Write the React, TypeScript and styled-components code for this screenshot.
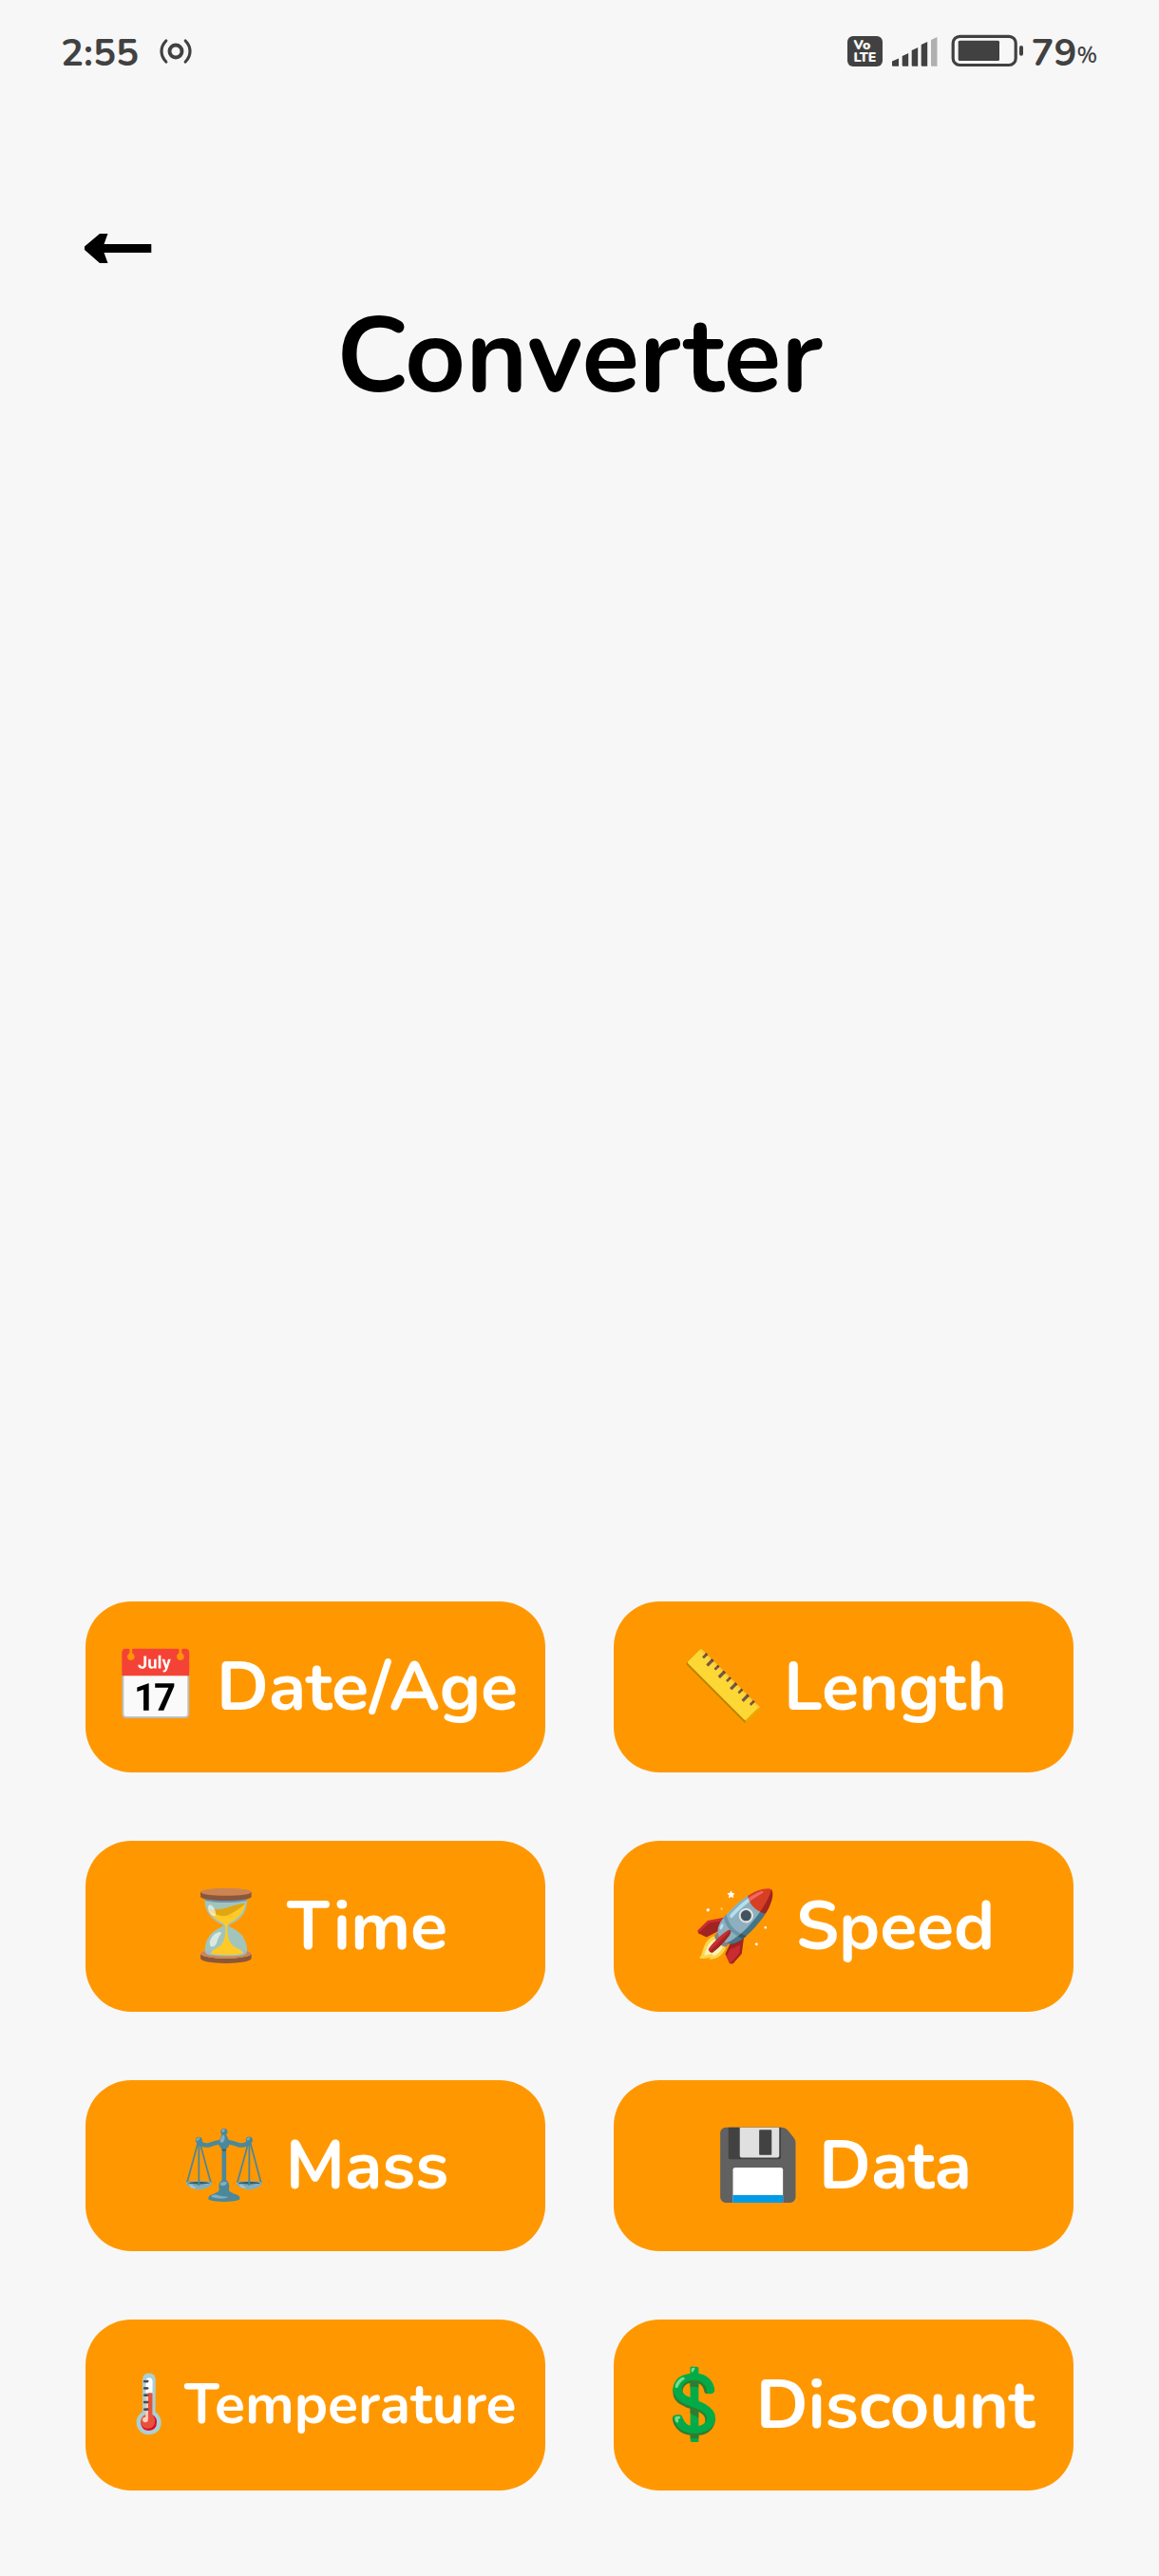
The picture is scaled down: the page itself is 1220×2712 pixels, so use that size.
import React from "react";
import styled, { createGlobalStyle } from "styled-components";

const GlobalStyle = createGlobalStyle`
  * { box-sizing: border-box; }
  body { margin: 0; background: #f7f7f7; }
`;

const font = `Nunito, Lato, "Noto Color Emoji", sans-serif`;
const ink = "#414141";

const Screen = styled.main`
  width: 1220px;
  height: 2712px;
  display: flex;
  flex-direction: column;
  background: #f7f7f7;
  font-family: ${font};
`;

const StatusBar = styled.header`
  height: 108px;
  display: flex;
  justify-content: space-between;
  align-items: flex-start;
  padding: 36px 65px 0 64px;
  color: ${ink};
`;

const StatusGroup = styled.div<{ $gap: number }>`
  display: flex;
  height: 36px;
  align-items: center;
  gap: ${(p) => p.$gap}px;
`;

const StatusText = styled.span`
  padding-top: 3px;
  font-size: 40px;
  font-weight: 700;
  line-height: 40px;
`;

const Percentage = styled.div`
  display: flex;
  align-items: center;
  margin-left: 8px;
`;

const Percent = styled.span`
  padding-top: 9px;
  font-size: 23px;
  font-weight: 600;
  line-height: 30px;
`;

const Badge = styled.div`
  width: 37px;
  height: 32px;
  padding-left: 6px;
  border-radius: 6px;
  background: ${ink};
  color: #f7f7f7;
  display: flex;
  flex-direction: column;
  justify-content: center;
  font-size: 14px;
  line-height: 13px;
  font-weight: 900;
`;

const BadgeSlot = styled.div`
  display: flex;
  align-items: center;
  height: 36px;
`;

const Signal = styled.svg`
  display: block;
  width: 48px;
  height: 36px;
  margin-left: 10px;
  fill: ${ink};
`;

const Battery = styled.svg`
  display: block;
  width: 76px;
  height: 36px;
  margin-left: 14px;
`;

const BackButton = styled.button`
  width: 71px;
  height: 31px;
  margin: 138px 0 0 89px;
  padding: 0;
  border: 0;
  background: none;
  display: flex;
`;

const Title = styled.h1`
  margin: 46px 0 0;
  text-align: center;
  font-size: 111.4px;
  font-weight: 700;
  line-height: 104px;
  color: #000;
`;

const Grid = styled.section`
  margin-top: auto;
  padding: 0 90px 90px;
  display: grid;
  grid-template-columns: 484px 484px;
  justify-content: space-between;
  row-gap: 72px;
`;

const Tile = styled.button<{ $compact?: boolean }>`
  height: 180px;
  padding: 0 0 ${(p) => (p.$compact ? 1 : 0)}px;
  border: 0;
  border-radius: 48px;
  background: #ff9800;
  color: #fff;
  display: flex;
  align-items: center;
  justify-content: center;
  font-family: ${font};
  font-size: ${(p) => (p.$compact ? 59 : 72)}px;
  font-weight: 700;
  line-height: 1;
  letter-spacing: ${(p) => (p.$compact ? 0 : -0.12)}px;
  white-space: pre;
`;

type Converter = { label: string; compact?: boolean };

const converters: Converter[] = [
  { label: "📅 Date/Age" },
  { label: "📏 Length" },
  { label: "⏳ Time" },
  { label: "🚀 Speed" },
  { label: "⚖️ Mass" },
  { label: "💾 Data" },
  { label: "🌡️Temperature", compact: true },
  { label: "💲 Discount" },
];

const HotspotIcon = () => (
  <svg width="34" height="28" viewBox="0 0 34 28" fill="none" stroke={ink} strokeLinecap="round">
    <circle cx="17" cy="14" r="6.500" strokeWidth="3.900" />
    <path d="M6.800 3C.4 9.500.4 18.500 6.800 25M27.200 3c6.400 6.500 6.400 15.500 0 22" strokeWidth="3.200" />
  </svg>
);

const SignalIcon = () => (
  <Signal viewBox="0 0 48 36">
    <path d="M0 28.500 7 25.500V33.700H1q-1 0-1-1z" />
    <path d="M10.700 23 17.200 20V33.700h-5.500q-1 0-1-1z" />
    <path d="M20.700 17 27.200 14V33.700h-5.500q-1 0-1-1z" />
    <path d="M30.700 11 37.200 8V33.700h-5.500q-1 0-1-1z" />
    <path d="M41 6 47.500 3V33.700h-5.500q-1 0-1-1z" fill="#b0b0b0" />
  </Signal>
);

const BatteryIcon = () => (
  <Battery viewBox="0 0 76 36">
    <rect x="2.200" y="2.300" width="66" height="30.200" rx="7" fill="none" stroke={ink} strokeWidth="3.200" />
    <rect x="7.700" y="6.800" width="43.300" height="21.300" rx="1.500" fill={ink} />
    <rect x="72" y="12" width="4" height="10.800" rx="2" fill={ink} />
  </Battery>
);

const BackArrow = () => (
  <svg width="71" height="31" viewBox="0 0 71 31">
    <path d="M0 13.500 16 0h8.500l-4 11H70.300v9H20.500l4 11H16L0 17z" />
  </svg>
);

export default function App() {
  return (
    <Screen>
      <GlobalStyle />
      <StatusBar>
        <StatusGroup $gap={22}>
          <StatusText>2:55</StatusText>
          <HotspotIcon />
        </StatusGroup>
        <StatusGroup $gap={0}>
          <BadgeSlot>
            <Badge>
              <span>Vo</span>
              <span>LTE</span>
            </Badge>
          </BadgeSlot>
          <SignalIcon />
          <BatteryIcon />
          <Percentage>
            <StatusText>79</StatusText>
            <Percent>%</Percent>
          </Percentage>
        </StatusGroup>
      </StatusBar>
      <BackButton aria-label="Back">
        <BackArrow />
      </BackButton>
      <Title>Converter</Title>
      <Grid>
        {converters.map((c) => (
          <Tile key={c.label} $compact={c.compact}>
            {c.label}
          </Tile>
        ))}
      </Grid>
    </Screen>
  );
}
